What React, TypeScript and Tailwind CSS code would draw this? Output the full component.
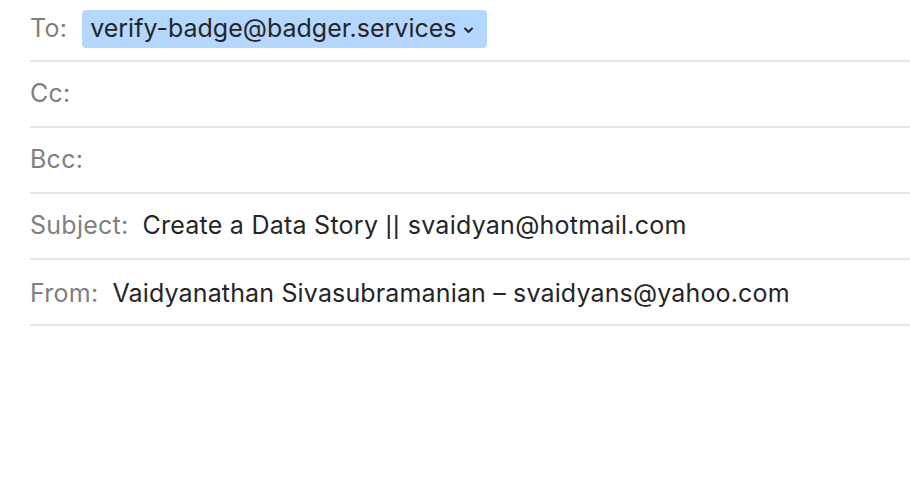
import React from "react";

const font = {
  fontFamily: "Inter, 'Noto Sans', 'Liberation Sans', sans-serif",
  fontFeatureSettings: "'calt' 0, 'liga' 0",
};

function Row({ h, children }: { h: string; children?: React.ReactNode }) {
  return (
    <div className={`flex items-center border-b-2 border-[#e5e5e5] ${h}`}>{children}</div>
  );
}

export default function App() {
  return (
    <div className="w-[910px] h-[494px] bg-white overflow-hidden" style={font}>
      <div className="pl-[30px]">
        <Row h="h-[62px] pb-[3px]">
          <span className="text-[25px] text-[#808080] tracking-[0.25px]">To:</span>
          <div className="ml-[15px] flex items-center h-[38px] pl-[8px] pr-[13px] rounded-[4px] bg-[#b3d7ff]">
            <span className="text-[25px] text-[#262626] tracking-[0px]">verify-badge@badger.services</span>
            <svg className="ml-[6px] mt-[3px]" width="11" height="8" viewBox="0 0 11 8">
              <path d="M2 2.5 L5.5 6 L9 2.5" fill="none" stroke="#262626" strokeWidth="2" strokeLinecap="round" strokeLinejoin="round" />
            </svg>
          </div>
        </Row>
        <Row h="h-[66px]">
          <span className="text-[25px] text-[#808080] tracking-[0.25px]">Cc:</span>
        </Row>
        <Row h="h-[66px]">
          <span className="text-[25px] text-[#808080] tracking-[0.25px]">Bcc:</span>
        </Row>
        <Row h="h-[66px]">
          <span className="text-[25px] text-[#808080] tracking-[0.25px]">Subject:</span>
          <span className="ml-[14px] text-[25px] text-[#262626] tracking-[0.25px] whitespace-pre">
            Create a Data Story{" "}
            <span className="font-['Liberation_Sans'] tracking-[1px]">||</span>{" "}
            svaidyan@hotmail.com
          </span>
        </Row>
        <Row h="h-[66px] pt-[4px]">
          <span className="text-[25px] text-[#808080] tracking-[0.25px]">From:</span>
          <span className="ml-[14px] text-[25px] text-[#262626] tracking-[0.15px]">Vaidyanathan Sivasubramanian – svaidyans@yahoo.com</span>
        </Row>
      </div>
    </div>
  );
}
